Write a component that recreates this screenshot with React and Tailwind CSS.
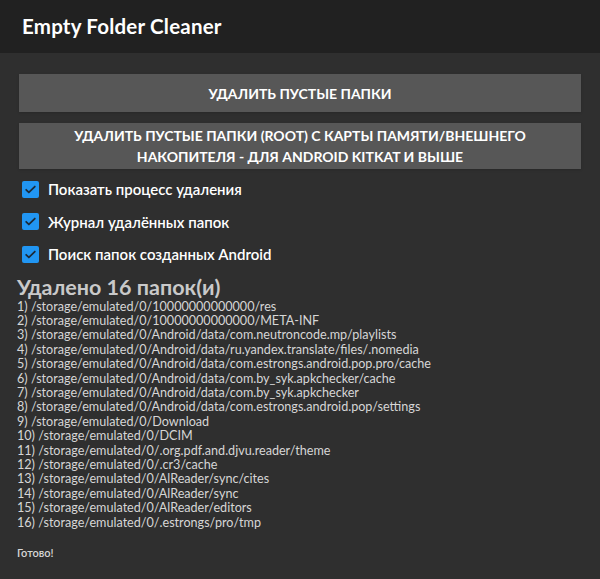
import React from 'react';

const deleted = [
  "/storage/emulated/0/10000000000000/res",
  "/storage/emulated/0/10000000000000/META-INF",
  "/storage/emulated/0/Android/data/com.neutroncode.mp/playlists",
  "/storage/emulated/0/Android/data/ru.yandex.translate/files/.nomedia",
  "/storage/emulated/0/Android/data/com.estrongs.android.pop.pro/cache",
  "/storage/emulated/0/Android/data/com.by_syk.apkchecker/cache",
  "/storage/emulated/0/Android/data/com.by_syk.apkchecker",
  "/storage/emulated/0/Android/data/com.estrongs.android.pop/settings",
  "/storage/emulated/0/Download",
  "/storage/emulated/0/DCIM",
  "/storage/emulated/0/.org.pdf.and.djvu.reader/theme",
  "/storage/emulated/0/.cr3/cache",
  "/storage/emulated/0/AlReader/sync/cites",
  "/storage/emulated/0/AlReader/sync",
  "/storage/emulated/0/AlReader/editors",
  "/storage/emulated/0/.estrongs/pro/tmp",
];

const options = [
  "Показать процесс удаления",
  "Журнал удалённых папок",
  "Поиск папок созданных Android",
];

const Check = ({ label }) => (
  <label className="flex items-center h-[32.5px] ml-[3px]">
    <span className="w-[17px] h-[17px] rounded-[2px] bg-[#2196f3] flex items-center justify-center">
      <svg width="13" height="13" viewBox="0 0 24 24" fill="none" stroke="#1c2a38" strokeWidth="3.2" strokeLinecap="round" strokeLinejoin="round">
        <path d="M4 12.5l5 5L20 6.5" />
      </svg>
    </span>
    <span className="ml-[9px] text-[15px] font-semibold text-white">{label}</span>
  </label>
);

const App = () => {
  return (
    <div className="w-[600px] h-[579px] flex flex-col bg-[#2f2f2f] overflow-hidden" style={{ fontFamily: "Lato, 'Noto Sans', sans-serif" }}>
      {/* шапка */}
      <div className="h-[53px] shrink-0 bg-[#212121] flex items-center px-[22px]">
        <h1 className="text-[20.5px] font-bold text-white tracking-[0.2px]">Empty Folder Cleaner</h1>
      </div>

      <div className="flex-1 px-[19px] pt-[21px]">
        <button className="w-full h-[38px] bg-[#575757] text-white text-[14px] font-bold uppercase shadow-sm">
          Удалить пустые папки
        </button>
        <button className="w-full h-[46px] mt-[11px] bg-[#575757] text-white text-[14px] font-bold uppercase leading-[21px] shadow-sm">
          Удалить пустые папки (root) с карты памяти/внешнего
          <br />
          накопителя - для Android KitKat и выше
        </button>

        <div className="mt-[4px] flex flex-col">
          {options.map((o) => (
            <Check key={o} label={o} />
          ))}
        </div>

        <div className="mt-[3px] ml-[-2px] text-[21.5px] font-bold text-[#c9c9c9] leading-[26px]">
          Удалено 16 папок(и)
        </div>
        <div className="ml-[-2px] text-[12.6px] text-[#d6d6d6] leading-[14.4px]">
          {deleted.map((p, i) => (
            <div key={i}>{i + 1}) {p}</div>
          ))}
        </div>
        <div className="ml-[-2px] mt-[15px] text-[11px] font-semibold text-[#d6d6d6]">Готово!</div>
      </div>
    </div>
  );
};

export default App;
